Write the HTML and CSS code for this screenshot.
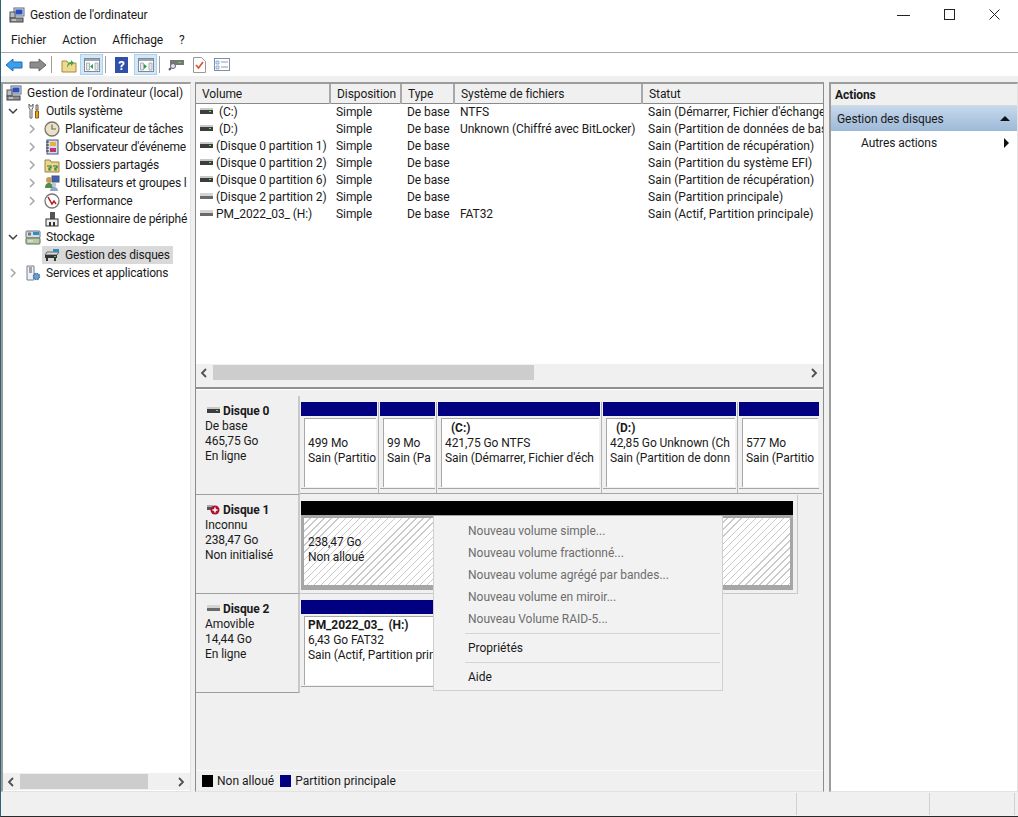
FILE: index.html
```html
<!DOCTYPE html>
<html lang="fr">
<head>
    <meta charset="UTF-8">
    <title>Gestion de l'ordinateur</title>
    <link rel="stylesheet" href="styles.css">
</head>
<body>
    <svg class="defs" width="0" height="0">
        <symbol id="computer" viewBox="0 0 16 16">
            <rect x="5" y="1" width="10" height="8" fill="#dfe6f0" stroke="#5a6a80"/>
            <rect x="6.500" y="2.500" width="7" height="5" fill="#2c4fb8"/>
            <rect x="1" y="5" width="5" height="6" fill="#b8bcc4" stroke="#555"/>
            <rect x="1" y="11" width="13" height="4" fill="#8d9096" stroke="#444"/>
            <path d="M3 13h4" stroke="#eee"/>
        </symbol>
        <symbol id="tools" viewBox="0 0 16 16">
            <path d="M4 1v4l1 1v9h2V6l1-1V1L7 3H5z" fill="#f2f2f2" stroke="#666"/>
            <path d="M11 2h2v5h-2z" fill="#d8d8d8" stroke="#666"/>
            <path d="M10.500 8h3v7h-3z" fill="#e8a818" stroke="#8a5a10"/>
        </symbol>
        <symbol id="clock" viewBox="0 0 16 16">
            <circle cx="8" cy="8" r="7" fill="#e9e2c6" stroke="#77746a" stroke-width="1.300"/>
            <path d="M8 3.500V8h4" fill="none" stroke="#6a6a6a" stroke-width="1.200"/>
        </symbol>
        <symbol id="log" viewBox="0 0 16 16">
            <rect x="3" y="1" width="11" height="14" fill="#d6dcec" stroke="#45557f"/>
            <path d="M2 3h3M2 6h3M2 9h3M2 12h3" stroke="#333"/>
            <rect x="6" y="3" width="6" height="4" fill="#e5b33c"/>
            <rect x="6" y="9" width="6" height="4" fill="#b8396b"/>
        </symbol>
        <symbol id="share" viewBox="0 0 16 16">
            <path d="M1 3h5l1 2h8v10H1z" fill="#edd68c" stroke="#9b8240"/>
            <path d="M3 9h4v2H5v2h2M9 9h4v2h-2v2h2" fill="none" stroke="#1f7c3c" stroke-width="1.200"/>
        </symbol>
        <symbol id="users" viewBox="0 0 16 16">
            <rect x="8" y="1" width="7" height="6" fill="#3a62c4" stroke="#555"/>
            <circle cx="5" cy="5" r="3" fill="#c99a5e"/>
            <path d="M1 13c0-4 2-5 4-5s4 1 4 5z" fill="#4b8f4b"/>
            <circle cx="10" cy="10" r="2.300" fill="#b9c6d8"/>
            <path d="M6 16c0-3 2-4 4-4s4 1 4 4z" fill="#8fa6c6"/>
        </symbol>
        <symbol id="perf" viewBox="0 0 16 16">
            <circle cx="8" cy="8" r="7" fill="#fff" stroke="#777" stroke-width="1.300"/>
            <path d="M4 4l4 7 2-3 2 3" fill="none" stroke="#b51c1c" stroke-width="1.500"/>
        </symbol>
        <symbol id="devmgr" viewBox="0 0 16 16">
            <rect x="6" y="1" width="5" height="7" fill="#555"/>
            <rect x="2" y="8" width="12" height="7" fill="#efefef" stroke="#333"/>
            <rect x="5" y="11" width="2" height="4" fill="#333"/>
            <rect x="9" y="11" width="2" height="4" fill="#333"/>
        </symbol>
        <symbol id="storage" viewBox="0 0 16 16">
            <rect x="1" y="2" width="14" height="7" rx="1" fill="#d8dde2" stroke="#6a7078"/>
            <rect x="8" y="3" width="6" height="3" fill="#2a8fc8"/>
            <rect x="3" y="3.500" width="3" height="3" fill="#6e7c86"/>
            <rect x="1" y="9" width="14" height="6" rx="1" fill="#b9c9a4" stroke="#5f6f55"/>
            <path d="M3 12h5" stroke="#eef"/>
        </symbol>
        <symbol id="diskmgmt" viewBox="0 0 16 16">
            <path d="M3 5h12l-2 3H1z" fill="#d8d8d8" stroke="#666"/>
            <rect x="1" y="8" width="12" height="3" fill="#333"/>
            <rect x="2" y="11" width="2" height="3" fill="#333"/>
            <rect x="10" y="11" width="2" height="3" fill="#333"/>
            <rect x="10" y="9" width="2" height="1" fill="#4fd04f"/>
            <rect x="9" y="2" width="6" height="3" fill="#2c8fb8"/>
        </symbol>
        <symbol id="services" viewBox="0 0 16 16">
            <path d="M2 1h7v14H2z" fill="#eef1f5" stroke="#77808c"/>
            <path d="M4 3h3M4 5h3M4 7h3" stroke="#555"/>
            <circle cx="11.500" cy="11.500" r="3" fill="#6aa0d8" stroke="#3c6ea8" stroke-width="1.500" stroke-dasharray="1.500 .8"/>
        </symbol>
        <symbol id="hdd" viewBox="0 0 13 7">
            <rect x="0" y="0" width="13" height="2" fill="#c9c9c9"/>
            <rect x="0" y="2" width="13" height="4" fill="#3d3d3d"/>
            <rect x="9" y="3" width="2" height="1" fill="#5fe05f"/>
        </symbol>
        <symbol id="hdd-plain" viewBox="0 0 13 7">
            <rect x="0" y="0" width="13" height="3" fill="#d4d4d4"/>
            <rect x="0" y="3" width="13" height="3" fill="#6a6a6a"/>
        </symbol>
        <symbol id="chev-right" viewBox="0 0 8 10">
            <path d="M2 1l4 4-4 4" fill="none" stroke="#a6a6a6" stroke-width="1.500"/>
        </symbol>
        <symbol id="chev-down" viewBox="0 0 10 8">
            <path d="M1 2l4 4 4-4" fill="none" stroke="#404040" stroke-width="1.500"/>
        </symbol>
        <symbol id="sb-left" viewBox="0 0 8 10">
            <path d="M6 1L2 5l4 4" fill="none" stroke="#505050" stroke-width="1.800"/>
        </symbol>
        <symbol id="sb-right" viewBox="0 0 8 10">
            <path d="M2 1l4 4-4 4" fill="none" stroke="#505050" stroke-width="1.800"/>
        </symbol>
        <symbol id="panel" viewBox="0 0 16 16">
            <rect x="0.500" y="1.500" width="15" height="13" fill="#fff" stroke="#7e8a96"/>
            <rect x="1" y="2" width="14" height="2" fill="#9aa6b2"/>
            <path d="M2.500 6h3v7h-3zM11 6h3v7h-3z" fill="#e6eaef" stroke="#8a96a2" stroke-width=".7"/>
        </symbol>
    </svg>

    <div class="window">
        <header class="titlebar">
            <svg class="app-icon"><use href="#computer"/></svg>
            <span class="title">Gestion de l'ordinateur</span>
            <div class="controls">
                <svg width="14" height="12"><path d="M0 6.500h13" stroke="#222"/></svg>
                <svg width="12" height="12"><rect x=".5" y=".5" width="10" height="10" fill="none" stroke="#222"/></svg>
                <svg width="12" height="12"><path d="M.5.500l10 10M10.500.500l-10 10" stroke="#222"/></svg>
            </div>
        </header>

        <nav class="menubar">
            <span>Fichier</span>
            <span>Action</span>
            <span>Affichage</span>
            <span>?</span>
        </nav>

        <div class="toolbar">
            <svg class="tool tool-back" width="18" height="16"><path d="M1 8l7-6v3h9v6H8v3z" fill="#3f9ee8" stroke="#1d6cb8"/></svg>
            <svg class="tool tool-fwd" width="18" height="16"><path d="M17 8l-7-6v3H1v6h9v3z" fill="#8c8c8c" stroke="#666"/></svg>
            <i class="tool-sep"></i>
            <svg class="tool tool-up" width="16" height="16"><path d="M1 4h5l1 2h8v9H1z" fill="#eed98e" stroke="#a58a3e"/><path d="M6 11c0-4 2-6 4-6V3l3 3-3 3V7c-2 0-3 2-4 4z" fill="#44a53c"/></svg>
            <span class="tool-on"><svg width="16" height="16"><use href="#panel"/><path d="M9 7v5L6 9.500z" fill="#2f9e44"/></svg></span>
            <i class="tool-sep"></i>
            <svg class="tool tool-help" width="13" height="16"><rect width="13" height="16" fill="#2f4fa8"/><text x="6.500" y="13" class="help-mark">?</text></svg>
            <span class="tool-on"><svg width="16" height="16"><use href="#panel"/><path d="M6 7v5l3-2.500z" fill="#2f9e44"/></svg></span>
            <i class="tool-sep"></i>
            <svg class="tool tool-disk" width="16" height="16"><rect x="2" y="3" width="14" height="5" fill="#777"/><rect x="10" y="5" width="3" height="1" fill="#4fe04f"/><circle cx="5" cy="9" r="2.500" fill="#dfe6ee" stroke="#667"/><path d="M3 11L1 13" stroke="#556" stroke-width="2"/></svg>
            <svg class="tool tool-check" width="13" height="16"><path d="M.5.500h8l4 4v11H.5z" fill="#fff" stroke="#999"/><path d="M3 8l2.500 3L10 5" fill="none" stroke="#d8502c" stroke-width="1.600"/></svg>
            <svg class="tool" width="16" height="13"><rect x=".5" y=".5" width="15" height="12" fill="#fff" stroke="#7e8fa6"/><path d="M2 3h3v3H2zM2 8h3v3H2z" fill="#dbe8f8" stroke="#5a88c8" stroke-width=".6"/><path d="M7 4h7M7 9h7" stroke="#999"/></svg>
        </div>

        <main class="workspace">
            <aside class="pane tree-pane">
                <ul class="tree">
                    <li class="tree-row lvl-0"><svg class="ico"><use href="#computer"/></svg><span>Gestion de l'ordinateur (local)</span></li>
                    <li class="tree-row lvl-1"><svg class="twist"><use href="#chev-down"/></svg><svg class="ico"><use href="#tools"/></svg><span>Outils système</span></li>
                    <li class="tree-row lvl-2"><svg class="twist"><use href="#chev-right"/></svg><svg class="ico"><use href="#clock"/></svg><span>Planificateur de tâches</span></li>
                    <li class="tree-row lvl-2"><svg class="twist"><use href="#chev-right"/></svg><svg class="ico"><use href="#log"/></svg><span>Observateur d'événeme</span></li>
                    <li class="tree-row lvl-2"><svg class="twist"><use href="#chev-right"/></svg><svg class="ico"><use href="#share"/></svg><span>Dossiers partagés</span></li>
                    <li class="tree-row lvl-2"><svg class="twist"><use href="#chev-right"/></svg><svg class="ico"><use href="#users"/></svg><span>Utilisateurs et groupes l</span></li>
                    <li class="tree-row lvl-2"><svg class="twist"><use href="#chev-right"/></svg><svg class="ico"><use href="#perf"/></svg><span>Performance</span></li>
                    <li class="tree-row lvl-2"><i class="twist"></i><svg class="ico"><use href="#devmgr"/></svg><span>Gestionnaire de périphé</span></li>
                    <li class="tree-row lvl-1"><svg class="twist"><use href="#chev-down"/></svg><svg class="ico"><use href="#storage"/></svg><span>Stockage</span></li>
                    <li class="tree-row lvl-2 selected"><i class="twist"></i><div class="sel-box"><svg class="ico"><use href="#diskmgmt"/></svg><span>Gestion des disques</span></div></li>
                    <li class="tree-row lvl-1"><svg class="twist"><use href="#chev-right"/></svg><svg class="ico"><use href="#services"/></svg><span>Services et applications</span></li>
                </ul>
                <div class="scrollbar tree-scroll">
                    <svg class="sb-arrow"><use href="#sb-left"/></svg>
                    <div class="sb-track"><div class="sb-thumb"></div></div>
                    <svg class="sb-arrow"><use href="#sb-right"/></svg>
                </div>
            </aside>

            <section class="pane center-pane">
                <div class="list-view">
                    <table class="volumes">
                        <colgroup>
                            <col class="c-vol"><col class="c-layout"><col class="c-type"><col class="c-fs"><col class="c-status">
                        </colgroup>
                        <thead>
                            <tr><th>Volume</th><th>Disposition</th><th>Type</th><th>Système de fichiers</th><th>Statut</th></tr>
                        </thead>
                        <tbody>
                            <tr><td><svg class="vol-ico"><use href="#hdd"/></svg><span class="vol-gap">(C:)</span></td><td>Simple</td><td>De base</td><td>NTFS</td><td>Sain (Démarrer, Fichier d'échange</td></tr>
                            <tr><td><svg class="vol-ico"><use href="#hdd"/></svg><span class="vol-gap">(D:)</span></td><td>Simple</td><td>De base</td><td>Unknown (Chiffré avec BitLocker)</td><td>Sain (Partition de données de bas</td></tr>
                            <tr><td><svg class="vol-ico"><use href="#hdd"/></svg>(Disque 0 partition 1)</td><td>Simple</td><td>De base</td><td></td><td>Sain (Partition de récupération)</td></tr>
                            <tr><td><svg class="vol-ico"><use href="#hdd"/></svg>(Disque 0 partition 2)</td><td>Simple</td><td>De base</td><td></td><td>Sain (Partition du système EFI)</td></tr>
                            <tr><td><svg class="vol-ico"><use href="#hdd"/></svg>(Disque 0 partition 6)</td><td>Simple</td><td>De base</td><td></td><td>Sain (Partition de récupération)</td></tr>
                            <tr><td><svg class="vol-ico"><use href="#hdd-plain"/></svg>(Disque 2 partition 2)</td><td>Simple</td><td>De base</td><td></td><td>Sain (Partition principale)</td></tr>
                            <tr><td><svg class="vol-ico"><use href="#hdd-plain"/></svg>PM_2022_03_ (H:)</td><td>Simple</td><td>De base</td><td>FAT32</td><td>Sain (Actif, Partition principale)</td></tr>
                        </tbody>
                    </table>
                </div>
                <div class="scrollbar list-scroll">
                    <svg class="sb-arrow"><use href="#sb-left"/></svg>
                    <div class="sb-track"><div class="sb-thumb"></div></div>
                    <svg class="sb-arrow"><use href="#sb-right"/></svg>
                </div>
                <div class="splitter"></div>

                <div class="disks">
                    <div class="disk disk-0">
                        <div class="disk-label">
                            <div class="disk-name"><svg class="vol-ico"><use href="#hdd"/></svg><b>Disque 0</b></div>
                            <div>De base</div>
                            <div>465,75 Go</div>
                            <div>En ligne</div>
                        </div>
                        <div class="parts">
                            <div class="part"><div class="bar"></div><div class="part-body"><div>&nbsp;</div><div>499 Mo</div><div>Sain (Partitio</div></div></div>
                            <div class="part"><div class="bar"></div><div class="part-body"><div>&nbsp;</div><div>99 Mo</div><div>Sain (Pa</div></div></div>
                            <div class="part"><div class="bar"></div><div class="part-body"><div class="part-name">(C:)</div><div>421,75 Go NTFS</div><div>Sain (Démarrer, Fichier d'éch</div></div></div>
                            <div class="part"><div class="bar"></div><div class="part-body"><div class="part-name">(D:)</div><div>42,85 Go Unknown (Ch</div><div>Sain (Partition de donn</div></div></div>
                            <div class="part"><div class="bar"></div><div class="part-body"><div>&nbsp;</div><div>577 Mo</div><div>Sain (Partitio</div></div></div>
                        </div>
                    </div>

                    <div class="disk disk-1">
                        <div class="disk-label">
                            <div class="disk-name"><svg class="vol-ico err-ico" viewBox="0 0 13 11"><rect x="0" y="1" width="6" height="2" fill="#aaa"/><rect x="0" y="3" width="6" height="3" fill="#555"/><circle cx="8" cy="6" r="4.500" fill="#b01030"/><path d="M5.500 6h5M8 3.500v5" stroke="#fff" stroke-width="1.500"/></svg><b>Disque 1</b></div>
                            <div>Inconnu</div>
                            <div>238,47 Go</div>
                            <div>Non initialisé</div>
                        </div>
                        <div class="parts unalloc-wrap">
                            <div class="bar bar-black"></div>
                            <div class="unalloc">
                                <div class="hatch">
                                    <div>238,47 Go</div>
                                    <div>Non alloué</div>
                                </div>
                            </div>
                        </div>
                    </div>

                    <div class="disk disk-2">
                        <div class="disk-label">
                            <div class="disk-name"><svg class="vol-ico"><use href="#hdd-plain"/></svg><b>Disque 2</b></div>
                            <div>Amovible</div>
                            <div>14,44 Go</div>
                            <div>En ligne</div>
                        </div>
                        <div class="parts">
                            <div class="part"><div class="bar"></div><div class="part-body"><div class="part-title">PM_2022_03_ &nbsp;(H:)</div><div>6,43 Go FAT32</div><div>Sain (Actif, Partition prin</div></div></div>
                        </div>
                    </div>

                    <div class="context-menu">
                        <div class="menu-item off">Nouveau volume simple...</div>
                        <div class="menu-item off">Nouveau volume fractionné...</div>
                        <div class="menu-item off">Nouveau volume agrégé par bandes...</div>
                        <div class="menu-item off">Nouveau volume en miroir...</div>
                        <div class="menu-item off">Nouveau Volume RAID-5...</div>
                        <div class="menu-sep"></div>
                        <div class="menu-item">Propriétés</div>
                        <div class="menu-sep"></div>
                        <div class="menu-item">Aide</div>
                    </div>
                </div>

                <footer class="legend">
                    <i class="swatch swatch-black"></i><span>Non alloué</span>
                    <i class="swatch swatch-blue"></i><span>Partition principale</span>
                </footer>
            </section>

            <aside class="pane actions-pane">
                <div class="actions-head">Actions</div>
                <div class="actions-group"><span>Gestion des disques</span><i class="arrow-up"></i></div>
                <div class="actions-item"><span>Autres actions</span><i class="arrow-right"></i></div>
            </aside>
        </main>

        <div class="statusbar">
            <div class="status-a"></div>
            <div class="status-b"></div>
            <div class="status-c"></div>
        </div>
    </div>
</body>
</html>
```

FILE: styles.css
```css
* {
    margin: 0;
    padding: 0;
    box-sizing: border-box;
}

body {
    font-family: Roboto, "Noto Sans", sans-serif;
    font-size: 12px;
    letter-spacing: -0.08px;
    color: #1a1a1a;
    background: #f0f0f0;
    overflow: hidden;
}

.defs {
    position: absolute;
}

.window {
    width: 1018px;
    height: 817px;
    display: flex;
    flex-direction: column;
    background: #f0f0f0;
    border-left: 1px solid #2b6478;
    border-bottom: 1px solid #2a2a2a;
}

/* title + menu */
.titlebar {
    height: 30px;
    flex: none;
    background: #fff;
    display: flex;
    align-items: center;
    padding-left: 8px;
}

.app-icon {
    width: 16px;
    height: 16px;
    margin-right: 5px;
}

.controls {
    margin-left: auto;
    display: flex;
    align-items: center;
    gap: 33px;
    padding-right: 17px;
}

.menubar {
    height: 23px;
    flex: none;
    background: #fff;
    border-bottom: 1px solid #a9a9a9;
    display: flex;
    align-items: center;
    padding: 0 0 2px 10px;
    gap: 16px;
}

.toolbar {
    height: 23px;
    flex: none;
    background: #fff;
    display: flex;
    align-items: center;
    padding-left: 4px;
}

.tool {
    flex: none;
}

.tool-back {
    margin-right: 6px;
}

.tool-fwd {
    margin-right: 4px;
}

.tool-sep {
    width: 1px;
    height: 17px;
    background: #a0a0a0;
    margin-right: 9px;
    flex: none;
}

.tool-on {
    width: 23px;
    height: 21px;
    background: #d5e7f7;
    border: 1px solid #a8d0ef;
    display: flex;
    align-items: center;
    justify-content: center;
    margin-right: 2px;
    flex: none;
}

.tool-up {
    margin-right: 3px;
}

.tool-help {
    margin-right: 6px;
}

.help-mark {
    font-size: 13px;
    font-weight: 700;
    fill: #fff;
    text-anchor: middle;
}

.tool-disk {
    margin: 0 9px 0 -1px;
}

.tool-check {
    margin-right: 8px;
}

/* three panes */
.workspace {
    flex: 1;
    display: flex;
    padding-top: 6px;
    min-height: 0;
}

.pane {
    display: flex;
    flex-direction: column;
    border: 1px solid #e2e2e2;
    border-top: 2px solid #9c9c9c;
    border-left: 2px solid #9c9c9c;
    background: #fff;
    overflow: hidden;
    position: relative;
}

.tree-pane {
    width: 190px;
    margin-right: 4px;
}

.center-pane {
    width: 629px;
    margin-right: 5px;
    background: #f0f0f0;
    border-left: 1px solid #8c8c8c;
    border-right: 1px solid #8c8c8c;
}

.actions-pane {
    width: 189px;
}

/* tree */
.tree {
    list-style: none;
    flex: 1;
    white-space: nowrap;
    letter-spacing: -0.18px;
}

.tree-row {
    height: 18px;
    display: flex;
    align-items: center;
    line-height: 18px;
}

.lvl-0 {
    padding-left: 3px;
    letter-spacing: 0;
}

.lvl-1 {
    padding-left: 5px;
}

.lvl-2 {
    padding-left: 24px;
}

.twist {
    width: 10px;
    height: 10px;
    margin-right: 7px;
    flex: none;
}

.ico {
    width: 16px;
    height: 16px;
    margin-right: 5px;
    flex: none;
}

.sel-box {
    display: flex;
    align-items: center;
    height: 18px;
    background: #d9d9d9;
    padding-right: 3px;
    margin-left: -2px;
    padding-left: 2px;
}

/* scrollbars */
.scrollbar {
    flex: none;
    display: flex;
    align-items: center;
    background: #f0f0f0;
    height: 17px;
}

.sb-arrow {
    width: 8px;
    height: 10px;
    flex: none;
}

.sb-track {
    flex: 1;
    height: 15px;
}

.sb-thumb {
    height: 100%;
    background: #cdcdcd;
}

.tree-scroll {
    margin: 0 0 1px;
}

.tree-scroll .sb-arrow {
    margin: 0 5px 0 4px;
}

.tree-scroll .sb-thumb {
    width: 128px;
}

.list-scroll .sb-arrow {
    margin: 0 5px 0 4px;
}

.list-scroll .sb-thumb {
    width: 321px;
}

/* volume list */
.list-view {
    height: 280px;
    flex: none;
    background: #fff;
    overflow: hidden;
}

.volumes {
    width: 640px;
    table-layout: fixed;
    border-collapse: collapse;
}

.c-vol { width: 134px; }
.c-layout { width: 71px; }
.c-type { width: 53px; }
.c-fs { width: 188px; }
.c-status { width: 194px; }

.volumes th {
    height: 19px;
    font-weight: 400;
    text-align: left;
    padding: 1px 0 0 6px;
    background: #f0f0f0;
    border-right: 2px solid #a8a8a8;
    border-bottom: 1px solid #8a8a8a;
}

.volumes td {
    height: 17px;
    padding-left: 6px;
    white-space: nowrap;
    overflow: hidden;
}

.volumes td:first-child {
    padding-left: 4px;
}

.volumes td:last-child {
    letter-spacing: 0;
}

.vol-ico {
    width: 13px;
    height: 7px;
    margin-right: 3px;
    vertical-align: 1px;
}

.vol-gap {
    margin-left: 3px;
}

.list-scroll {
    margin-bottom: 6px;
}

.splitter {
    height: 3px;
    flex: none;
    background: #fff;
    border-top: 2px solid #8f8f8f;
}

/* disks */
.disks {
    flex: 1;
    position: relative;
    padding-top: 6px;
    background: #f0f0f0;
    line-height: 15px;
    overflow: hidden;
}

.disk {
    display: flex;
    height: 99px;
}

.disk-label {
    width: 104px;
    flex: none;
    padding: 8px 0 0 9px;
    border-right: 2px solid #c8c8c8;
    border-bottom: 1px solid #9f9f9f;
}

.disk-name {
    white-space: nowrap;
}

.disk-name b {
    font-weight: 700;
}

.disk-name .vol-ico {
    margin-left: 2px;
    margin-right: 3px;
}

.disk-name .err-ico {
    height: 11px;
    vertical-align: -1px;
}

.parts {
    flex: 1;
    display: grid;
    padding: 6px 0 0 1px;
    column-gap: 3px;
    align-content: start;
}

.disk-0 .parts {
    grid-template-columns: 76px 55px 162px 133px 80px;
    width: 522px;
    flex: none;
    height: 98px;
    border-bottom: 1px solid #a6a6a6;
}

.disk-2 .parts {
    grid-template-columns: 200px;
}

.part {
    height: 87px;
    position: relative;
    border-bottom: 1px solid #a6a6a6;
}

.part + .part::before {
    content: "";
    position: absolute;
    left: -2px;
    top: 0;
    bottom: -5px;
    width: 1px;
    background: #b4b4b4;
}

.bar {
    height: 14px;
    background: #000080;
}

.part-body {
    height: 69px;
    margin: 2px 1px 0 3px;
    padding: 2px 0 0 3px;
    background: #fff;
    border-top: 1px solid #a8a8a8;
    border-left: 1px solid #a8a8a8;
    white-space: nowrap;
    overflow: hidden;
}

.part-name {
    font-weight: 700;
    padding-left: 6px;
}

.part-title {
    font-weight: 700;
}

.disk-2 .part-body {
    padding-top: 1px;
}

.unalloc-wrap {
    flex: none;
    width: 498px;
    height: 99px;
    border-right: 1px solid #c8c8c8;
    border-bottom: 1px solid #c8c8c8;
    padding-right: 4px;
}

.bar-black {
    background: #000;
}

.unalloc {
    height: 75px;
    background: #f0f0f0;
    border: 3px solid #a6a6a6;
    border-bottom-width: 5px;
}

.hatch {
    height: 67px;
    padding-top: 17px;
    padding-left: 4px;
    background: repeating-linear-gradient(135deg, #fff 0, #fff 4px, #c9c9c9 4px, #c9c9c9 5px);
    white-space: nowrap;
}

.context-menu {
    position: absolute;
    left: 237px;
    top: 126px;
    width: 290px;
    height: 175px;
    padding: 4px 2px 0 31px;
    background: #f2f2f2;
    border: 1px solid #cfcfcf;
    border-top: 0;
    letter-spacing: 0;
}

.menu-item {
    height: 22px;
    line-height: 22px;
    padding-left: 3px;
    white-space: nowrap;
}

.menu-item.off {
    color: #6d6d6d;
}

.menu-sep {
    height: 1px;
    background: #d4d4d4;
    margin: 3px 0;
}

/* legend */
.legend {
    height: 21px;
    flex: none;
    display: flex;
    align-items: center;
    padding-left: 6px;
    border-top: 1px solid #fafafa;
    background: #f0f0f0;
    letter-spacing: 0;
}

.swatch {
    width: 11px;
    height: 12px;
    margin-right: 4px;
}

.swatch-black {
    background: #000;
}

.swatch-blue {
    background: #000080;
    margin-left: 6px;
}

/* actions */
.actions-head {
    height: 22px;
    line-height: 22px;
    padding-left: 4px;
    font-weight: 700;
    background: #f0f0f0;
    border-bottom: 1px solid #d8d8d8;
    flex: none;
}

.actions-group {
    height: 25px;
    flex: none;
    display: flex;
    align-items: center;
    justify-content: space-between;
    padding: 0 7px 0 6px;
    background: linear-gradient(#c6d8ec, #9db9d8);
}

.arrow-up {
    width: 0;
    height: 0;
    border-left: 5px solid transparent;
    border-right: 5px solid transparent;
    border-bottom: 5px solid #111;
}

.actions-item {
    height: 24px;
    flex: none;
    display: flex;
    align-items: center;
    justify-content: space-between;
    padding: 0 8px 0 30px;
}

.arrow-right {
    width: 0;
    height: 0;
    border-top: 5px solid transparent;
    border-bottom: 5px solid transparent;
    border-left: 5px solid #111;
}

/* status */
.statusbar {
    height: 24px;
    flex: none;
    display: flex;
    padding: 1px 0;
}

.status-a,
.status-b,
.status-c {
    border-right: 1px solid #d0d0d0;
}

.status-a {
    width: 796px;
}

.status-b {
    width: 133px;
}

.status-c {
    width: 85px;
}
```
